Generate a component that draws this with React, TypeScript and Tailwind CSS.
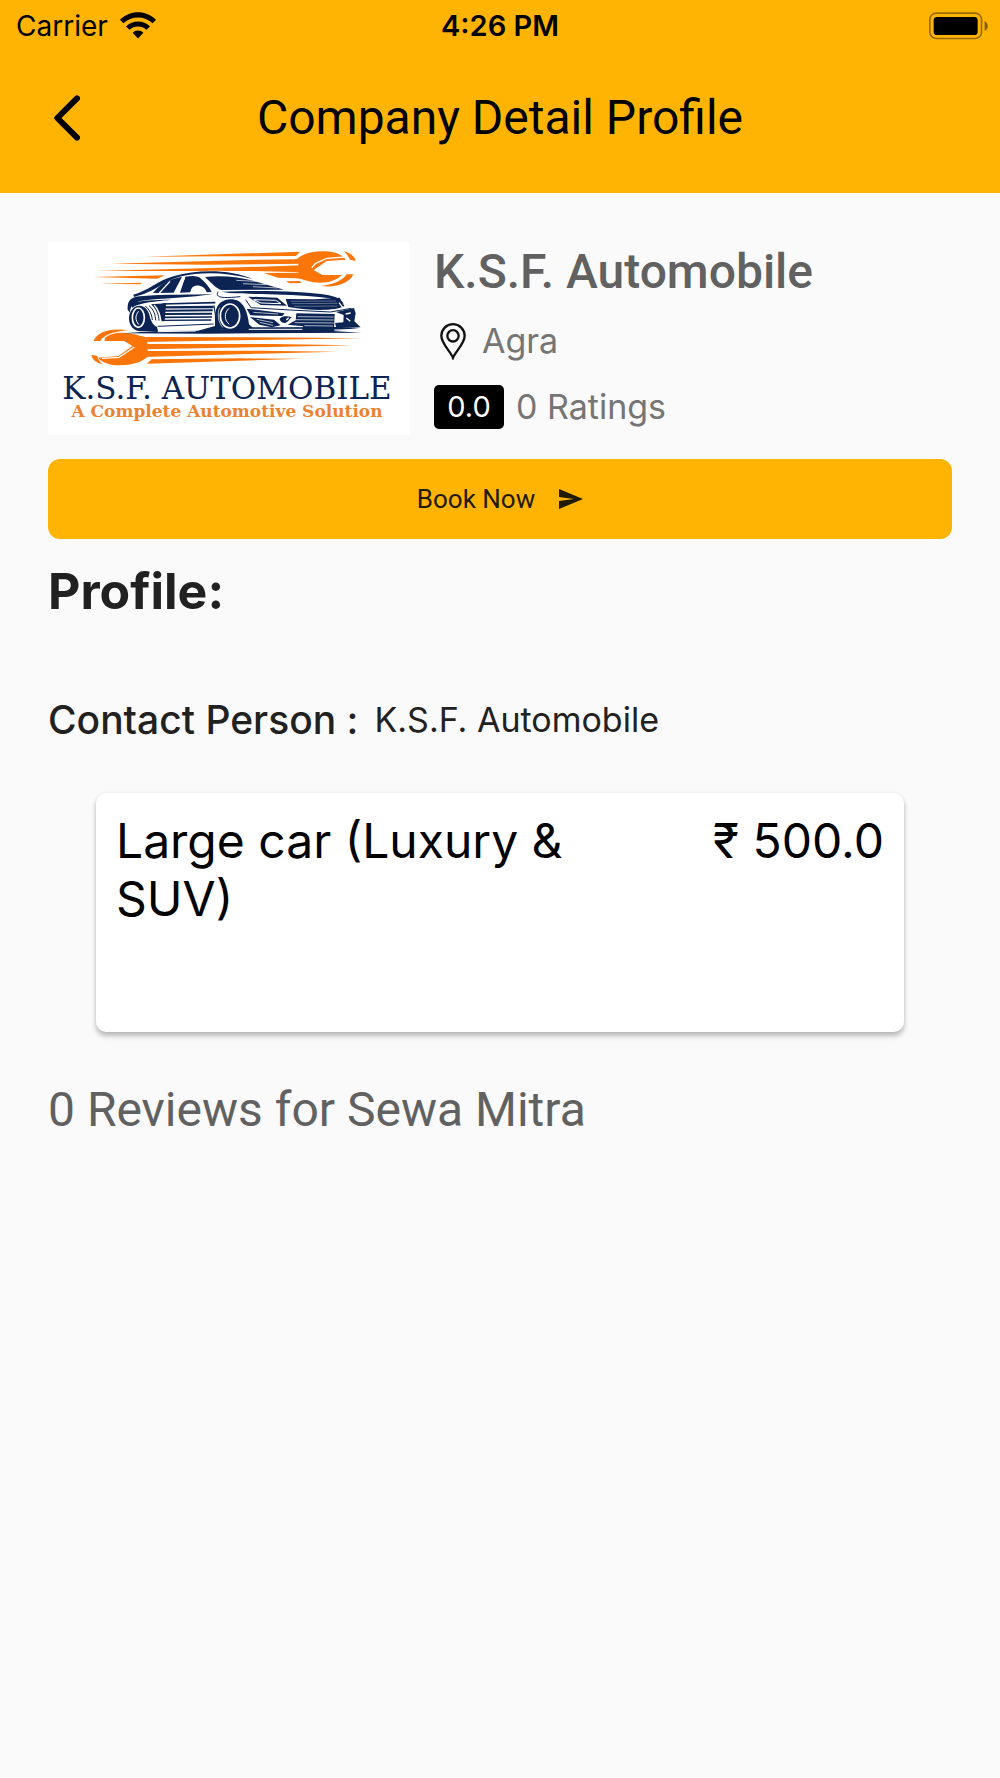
import { ReactNode } from "react";

type Service = { name: string; price: string };

const COMPANY = {
  name: "K.S.F. Automobile",
  city: "Agra",
  rating: "0.0",
  ratings: 0,
  reviews: 0,
  contact: "K.S.F. Automobile",
};

const SERVICES: Service[] = [{ name: "Large car (Luxury & SUV)", price: "₹ 500.0" }];

function WifiIcon() {
  return (
    <svg viewBox="0 0 108 80" className="h-[27px] w-9" aria-hidden="true">
      <path d="M0 23C30-7 78-7 108 23L98 33C73 10 35 10 10 33Z" />
      <path d="M18 43C38 23 70 23 90 43L79 53C65 40 43 40 29 53Z" />
      <path d="M38 62C47 53 61 53 70 62L54 79Z" />
    </svg>
  );
}

function BatteryIcon() {
  return (
    <svg viewBox="0 0 177 82" className="h-7 w-[59px]" aria-hidden="true">
      <rect x="2.5" y="2.5" width="155" height="76" rx="19" fill="none" stroke="#000" strokeOpacity=".4" strokeWidth="5" />
      <rect x="14" y="14" width="132" height="54" rx="10" />
      <path d="M167 26C179 32 179 50 167 56Z" opacity=".5" />
    </svg>
  );
}

function PinIcon() {
  return (
    <svg viewBox="0 0 78 110" className="h-[37px] w-[26px]" fill="none" stroke="#111" strokeWidth="7" aria-hidden="true">
      <path d="M39 104C31 84 4 62 4 38a35 35 0 0 1 70 0C74 62 47 84 39 104Z" />
      <circle cx="39" cy="38" r="17" />
    </svg>
  );
}

function CompanyLogo() {
  return (
    <svg viewBox="25 35 1086 579" className="w-[362px] shrink-0 bg-white" role="img" aria-label="K.S.F. Automobile logo">
      {/* upper wrench and its speed lines */}
      <g fill="#fb7508">
        <path d="M315 79L782 64L768 77L560 78Z" />
        <path d="M215 100L650 88L765 87L785 82L800 100L500 103Z" />
        <path d="M170 122L600 111L790 105L790 126L640 122Z" />
        <path d="M160 140L376 135L352 145Z" />
        <path d="M672 128L790 127L802 148L770 144L715 142Z" />
        <path d="M180 160L305 157L303 162Z" />
        <path d="M740 153L780 152L786 158L748 159Z" />
        <path d="M776 82C798 67 826 62 857 63C890 65 910 75 918 88L861 92L822 119L848 134L907 134C890 150 868 157 840 157C815 156 797 151 776 142Z" />
        <path d="M912 63C933 68 945 78 948 92L931 88C927 78 921 70 912 63Z" />
        <path d="M941 132C930 158 892 173 843 167C884 162 908 151 921 132Z" />
      </g>
      <path d="M816 112L828 99L861 84L918 80" fill="none" stroke="#fff" strokeWidth="4" />

      {/* lower wrench and its speed lines */}
      <g fill="#fb7508">
        <path d="M300 320L640 321L968 324L640 329L310 335Z" />
        <path d="M310 341L700 341L936 345L700 350L315 357Z" />
        <path d="M315 362L660 361L890 364L660 370L312 380Z" />
        <path d="M336 387L600 384L788 385L600 391L322 400Z" />
        <path d="M195 325C205 312 232 306 258 308C285 310 303 317 322 322L325 378C306 397 275 405 240 405C210 405 186 396 175 382L236 377L278 347L254 332L195 332Z" />
        <path d="M162 332C170 304 215 291 266 300C221 303 191 315 182 332Z" />
        <path d="M155 374L172 376C175 388 181 396 190 402C170 398 158 388 155 374Z" />
      </g>
      <path d="M187 384L238 381L284 350" fill="none" stroke="#fff" strokeWidth="4" />

      {/* car body */}
      <path d="M278 197C330 178 360 140 450 127C590 108 650 140 740 178C820 183 880 185 905 205C935 225 945 235 948 250L965 290L930 292L880 300L350 300L270 285L264 230Z" fill="#fff" />
      <g fill="#0b2454">
        <path d="M281 193C325 182 352 151 404 137C478 115 576 118 640 146C560 126 485 124 425 138C372 151 350 184 283 200Z" />
        <path d="M340 188C358 164 386 147 427 139L402 187Z" />
        <path d="M437 139C460 135 478 137 484 145C498 157 510 171 516 185L501 186C496 164 461 158 454 178L452 186L421 187Z" />
        <path d="M496 140C541 134 600 139 650 154L733 178L546 179C530 176 515 157 496 140Z" />
        <path d="M264 238C262 209 276 200 302 198C380 190 455 195 524 190C455 202 365 203 306 211C281 216 271 228 271 247Z" />
        <path d="M272 220C300 210 345 208 395 208C330 215 300 217 278 232Z" />
        <path d="M334 222L379 219L375 273L365 273C361 251 353 235 334 222Z" />
        <path d="M526 270C525 222 545 207 577 207C610 208 624 243 628 282L648 300L526 298Z" />
        <path d="M546 184C640 180 790 181 864 194C891 199 902 207 912 220C894 208 873 202 829 199C730 190 643 193 570 188Z" />
        <path d="M625 199L713 202L742 226L663 224Z" />
        <path d="M738 206L827 207L900 202L914 227C888 242 818 242 746 230Z" />
        <path d="M621 235L735 249L728 257L632 255Z" />
        <path d="M631 260L703 268L723 285L696 291L659 283Z" />
        <path d="M770 249L885 251L883 299L793 304L790 288L744 283L768 270Z" />
        <path d="M889 245L943 233L948 249L944 273L962 290L890 292L886 278L911 276L912 254Z" />
        <path d="M720 265C730 254 747 258 757 261C749 264 748 275 736 278C726 278 721 272 720 265Z" />
        <ellipse cx="299" cy="264" rx="31" ry="38" />
        <path d="M313 231C333 248 330 282 352 290L355 302L297 303Z" />
        <path d="M250 309L350 302L475 301L528 286L545 298L625 291L689 291L900 290L965 292L880 302L966 307L500 310Z" />
      </g>

      {/* wheels */}
      <g fill="none" stroke="#fff">
        <ellipse cx="296" cy="262" rx="18" ry="29" strokeWidth="5" />
        <path d="M297 243C286 255 286 270 298 283" strokeWidth="3" />
        <ellipse cx="571" cy="257" rx="29" ry="36" strokeWidth="5" />
        <path d="M568 234C553 247 553 270 569 282" strokeWidth="3" />
        <path d="M540 232C532 248 535 275 549 291" strokeWidth="2" />
        <path d="M320 226C337 238 340 255 342 273M332 224C347 236 350 255 353 273M343 224C358 238 361 256 364 274" strokeWidth="4" />
      </g>
      <path d="M317 227C330 238 337 253 338 269M328 226C343 238 347 254 348 270M339 225C353 240 357 254 358 271" fill="none" stroke="#0b2454" strokeWidth="3" />

      {/* door, glass and grille streaks */}
      <g fill="none" stroke="#0b2454">
        <path d="M368 221L527 217" strokeWidth="5" />
        <path d="M368 231L522 230" strokeWidth="7" />
        <path d="M368 241L519 240" strokeWidth="6" />
        <path d="M368 251L517 250" strokeWidth="6" />
        <path d="M368 261L517 260" strokeWidth="5" />
        <path d="M368 270L515 269" strokeWidth="4" />
        <path d="M354 288L522 281M523 225L529 269" strokeWidth="3" />
        <path d="M535 184C525 203 550 204 602 199M618 208L634 232L750 239L872 245L935 234" strokeWidth="3" />
      </g>
      <g fill="none" stroke="#fff">
        <path d="M359 188L391 153M414 184L435 142" strokeWidth="4" />
        <path d="M590 150L650 153M610 160L679 163M640 169L714 173" strokeWidth="2" />
        <path d="M642 208L708 210L724 220L664 218Z" strokeWidth="3" />
        <path d="M753 213L889 212M756 220L894 219M763 228L893 227" strokeWidth="1" />
        <path d="M641 246L715 251M651 267L700 277M660 276L700 285" strokeWidth="2" />
        <path d="M774 259L882 260M767 268L882 269M765 277L882 278M794 286L880 287" strokeWidth="2" />
        <path d="M740 269L747 262M898 217L909 231" strokeWidth="4" />
        <path d="M627 297L788 297M884 299L936 298M354 304L468 302" strokeWidth="3" />
        <path d="M918 251L933 248M920 263L932 273" strokeWidth="4" />
      </g>
      <text x="562" y="507" textAnchor="middle" fontSize="93" fill="#0b2454" className="font-['DejaVu_Serif']">
        K.S.F. AUTOMOBILE
      </text>
      <text x="562" y="561" textAnchor="middle" fontSize="51" fontWeight="700" fill="#e98332" className="font-['DejaVu_Serif']">
        A Complete Automotive Solution
      </text>
    </svg>
  );
}

function StatusBar() {
  return (
    <div className="grid h-[51px] grid-cols-3 items-center px-4 text-[28px] leading-none">
      <div className="flex items-center gap-3">
        <span>Carrier</span>
        <WifiIcon />
      </div>
      <span className="text-center text-[29px] font-semibold">4:26 PM</span>
      <div className="-mr-1 flex justify-end">
        <BatteryIcon />
      </div>
    </div>
  );
}

function Row({ children, className = "" }: { children: ReactNode; className?: string }) {
  return <div className={`flex items-center ${className}`}>{children}</div>;
}

export default function App() {
  return (
    <div className="min-h-screen bg-[#fafafa] font-['Inter',sans-serif] text-[#212121]">
      <header className="bg-[#ffb404] text-black">
        <StatusBar />
        <div className="grid h-[142px] grid-cols-[88px_1fr_88px] items-center pb-2">
          <button type="button" aria-label="Back" className="flex justify-end pr-2">
            <svg viewBox="0 0 78 138" className="h-[46px] w-[26px]" fill="none" stroke="#000" strokeWidth="18" strokeLinecap="round" strokeLinejoin="round">
              <path d="M69 10L10 69L69 128" />
            </svg>
          </button>
          <h1 className="text-center font-['Roboto'] text-5xl leading-[56px]">Company Detail Profile</h1>
        </div>
      </header>

      <main className="px-12 pt-[49px]">
        <section className="flex gap-6">
          <CompanyLogo />
          <div className="flex min-w-0 flex-col">
            <h2 className="font-['Roboto'] text-5xl leading-[60px] font-medium text-[#616161]">{COMPANY.name}</h2>
            <Row className="mt-4 gap-4 pl-[6px] text-[#757575]">
              <PinIcon />
              <span className="text-[34px] leading-[46px]">{COMPANY.city}</span>
            </Row>
            <Row className="mt-5 gap-3 text-[#757575]">
              <span className="flex h-11 w-[70px] items-center justify-center rounded-[5px] bg-black text-[29px] text-white">
                {COMPANY.rating}
              </span>
              <span className="text-[34px] leading-[46px]">{COMPANY.ratings} Ratings</span>
            </Row>
          </div>
        </section>

        <button
          type="button"
          className="mt-6 flex h-20 w-full items-center justify-center gap-6 rounded-xl bg-[#ffb404] font-['Roboto'] text-[26px] text-[#211a05]"
        >
          Book Now
          <svg viewBox="0 0 24 20" className="h-5 w-6" fill="currentColor" aria-hidden="true">
            <path d="M0 0L24 10L0 20V12L15 10L0 8Z" />
          </svg>
        </button>

        <h2 className="mt-[22px] text-[50px] leading-[60px] font-bold">Profile:</h2>

        <p className="mt-[73px] flex items-center gap-4 leading-[52px]">
          <span className="text-[39px] leading-[52px] font-medium">Contact Person :</span>
          <span className="text-[34px]">{COMPANY.contact}</span>
        </p>

        <ul className="mx-12 mt-[47px]">
          {SERVICES.map((s) => (
            <li
              key={s.name}
              className="flex h-[239px] items-start justify-between rounded-[10px] bg-white px-5 pt-[19px] text-5xl leading-[58px] text-black shadow-[0_4px_5px_rgba(0,0,0,0.25),0_0_3px_rgba(0,0,0,0.08)]"
            >
              <span className="max-w-[480px]">{s.name}</span>
              <span>{s.price}</span>
            </li>
          ))}
        </ul>

        <h2 className="mt-12 font-['Roboto'] text-5xl leading-[60px] text-[#616161]">
          {COMPANY.reviews} Reviews for Sewa Mitra
        </h2>
      </main>
    </div>
  );
}
